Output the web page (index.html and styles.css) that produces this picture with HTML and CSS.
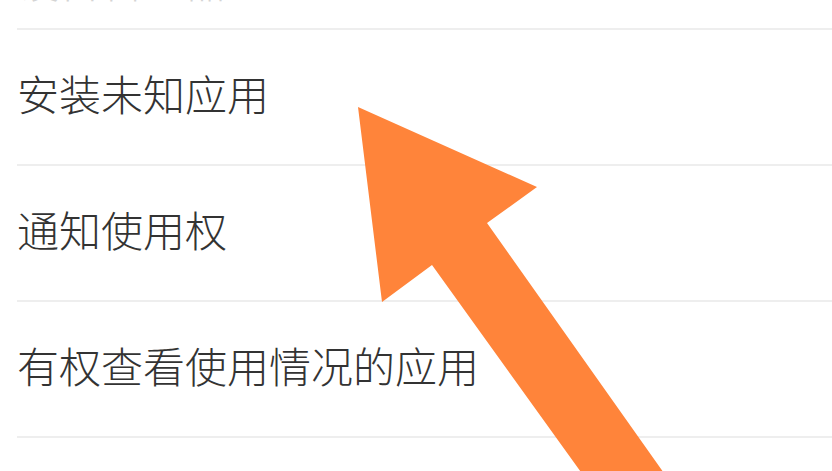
FILE: index.html
```html
<!DOCTYPE html>
<html lang="zh-CN">
<head>
<meta charset="utf-8">
<title>设置</title>
<link rel="stylesheet" href="styles.css">
</head>
<body>
<div class="page">
  <ul class="list">
    <li class="row partial"><span class="label faint">设备管理器</span></li>
    <li class="row"><span class="label">安装未知应用</span></li>
    <li class="row"><span class="label">通知使用权</span></li>
    <li class="row"><span class="label">有权查看使用情况的应用</span></li>
    <li class="row"><span class="label"></span></li>
  </ul>
  <svg class="arrow" width="832" height="471" viewBox="0 0 832 471" aria-hidden="true">
    <polygon points="358,107 537,187 487,223 683,500 601,500 432,265 382,302" fill="#ff843a"/>
  </svg>
</div>
</body>
</html>
```

FILE: styles.css
```css
* { box-sizing: border-box; }
html, body {
  margin: 0;
  padding: 0;
  background: #ffffff;
}
body {
  width: 832px;
  height: 471px;
  overflow: hidden;
  font-family: "Noto Sans CJK SC", "Noto Sans", sans-serif;
}
.page {
  position: relative;
  width: 832px;
  height: 471px;
  overflow: hidden;
}
.list {
  list-style: none;
  margin: 0 0 0 17px;
  padding: 0;
}
.row {
  height: 136px;
  display: flex;
  align-items: center;
  padding-bottom: 8px;
  border-bottom: 2px solid #eeeeee;
  overflow: hidden;
}
.row.partial {
  height: 30px;
  padding-bottom: 0;
  align-items: flex-end;
}
.label {
  font-size: 42px;
  line-height: 42px;
  color: #333333;
  font-weight: 300;
  white-space: nowrap;
}
.label.faint {
  color: #d4d4d4;
  margin-bottom: 27px;
}
.arrow {
  position: absolute;
  left: 0;
  top: 0;
  pointer-events: none;
}
```
